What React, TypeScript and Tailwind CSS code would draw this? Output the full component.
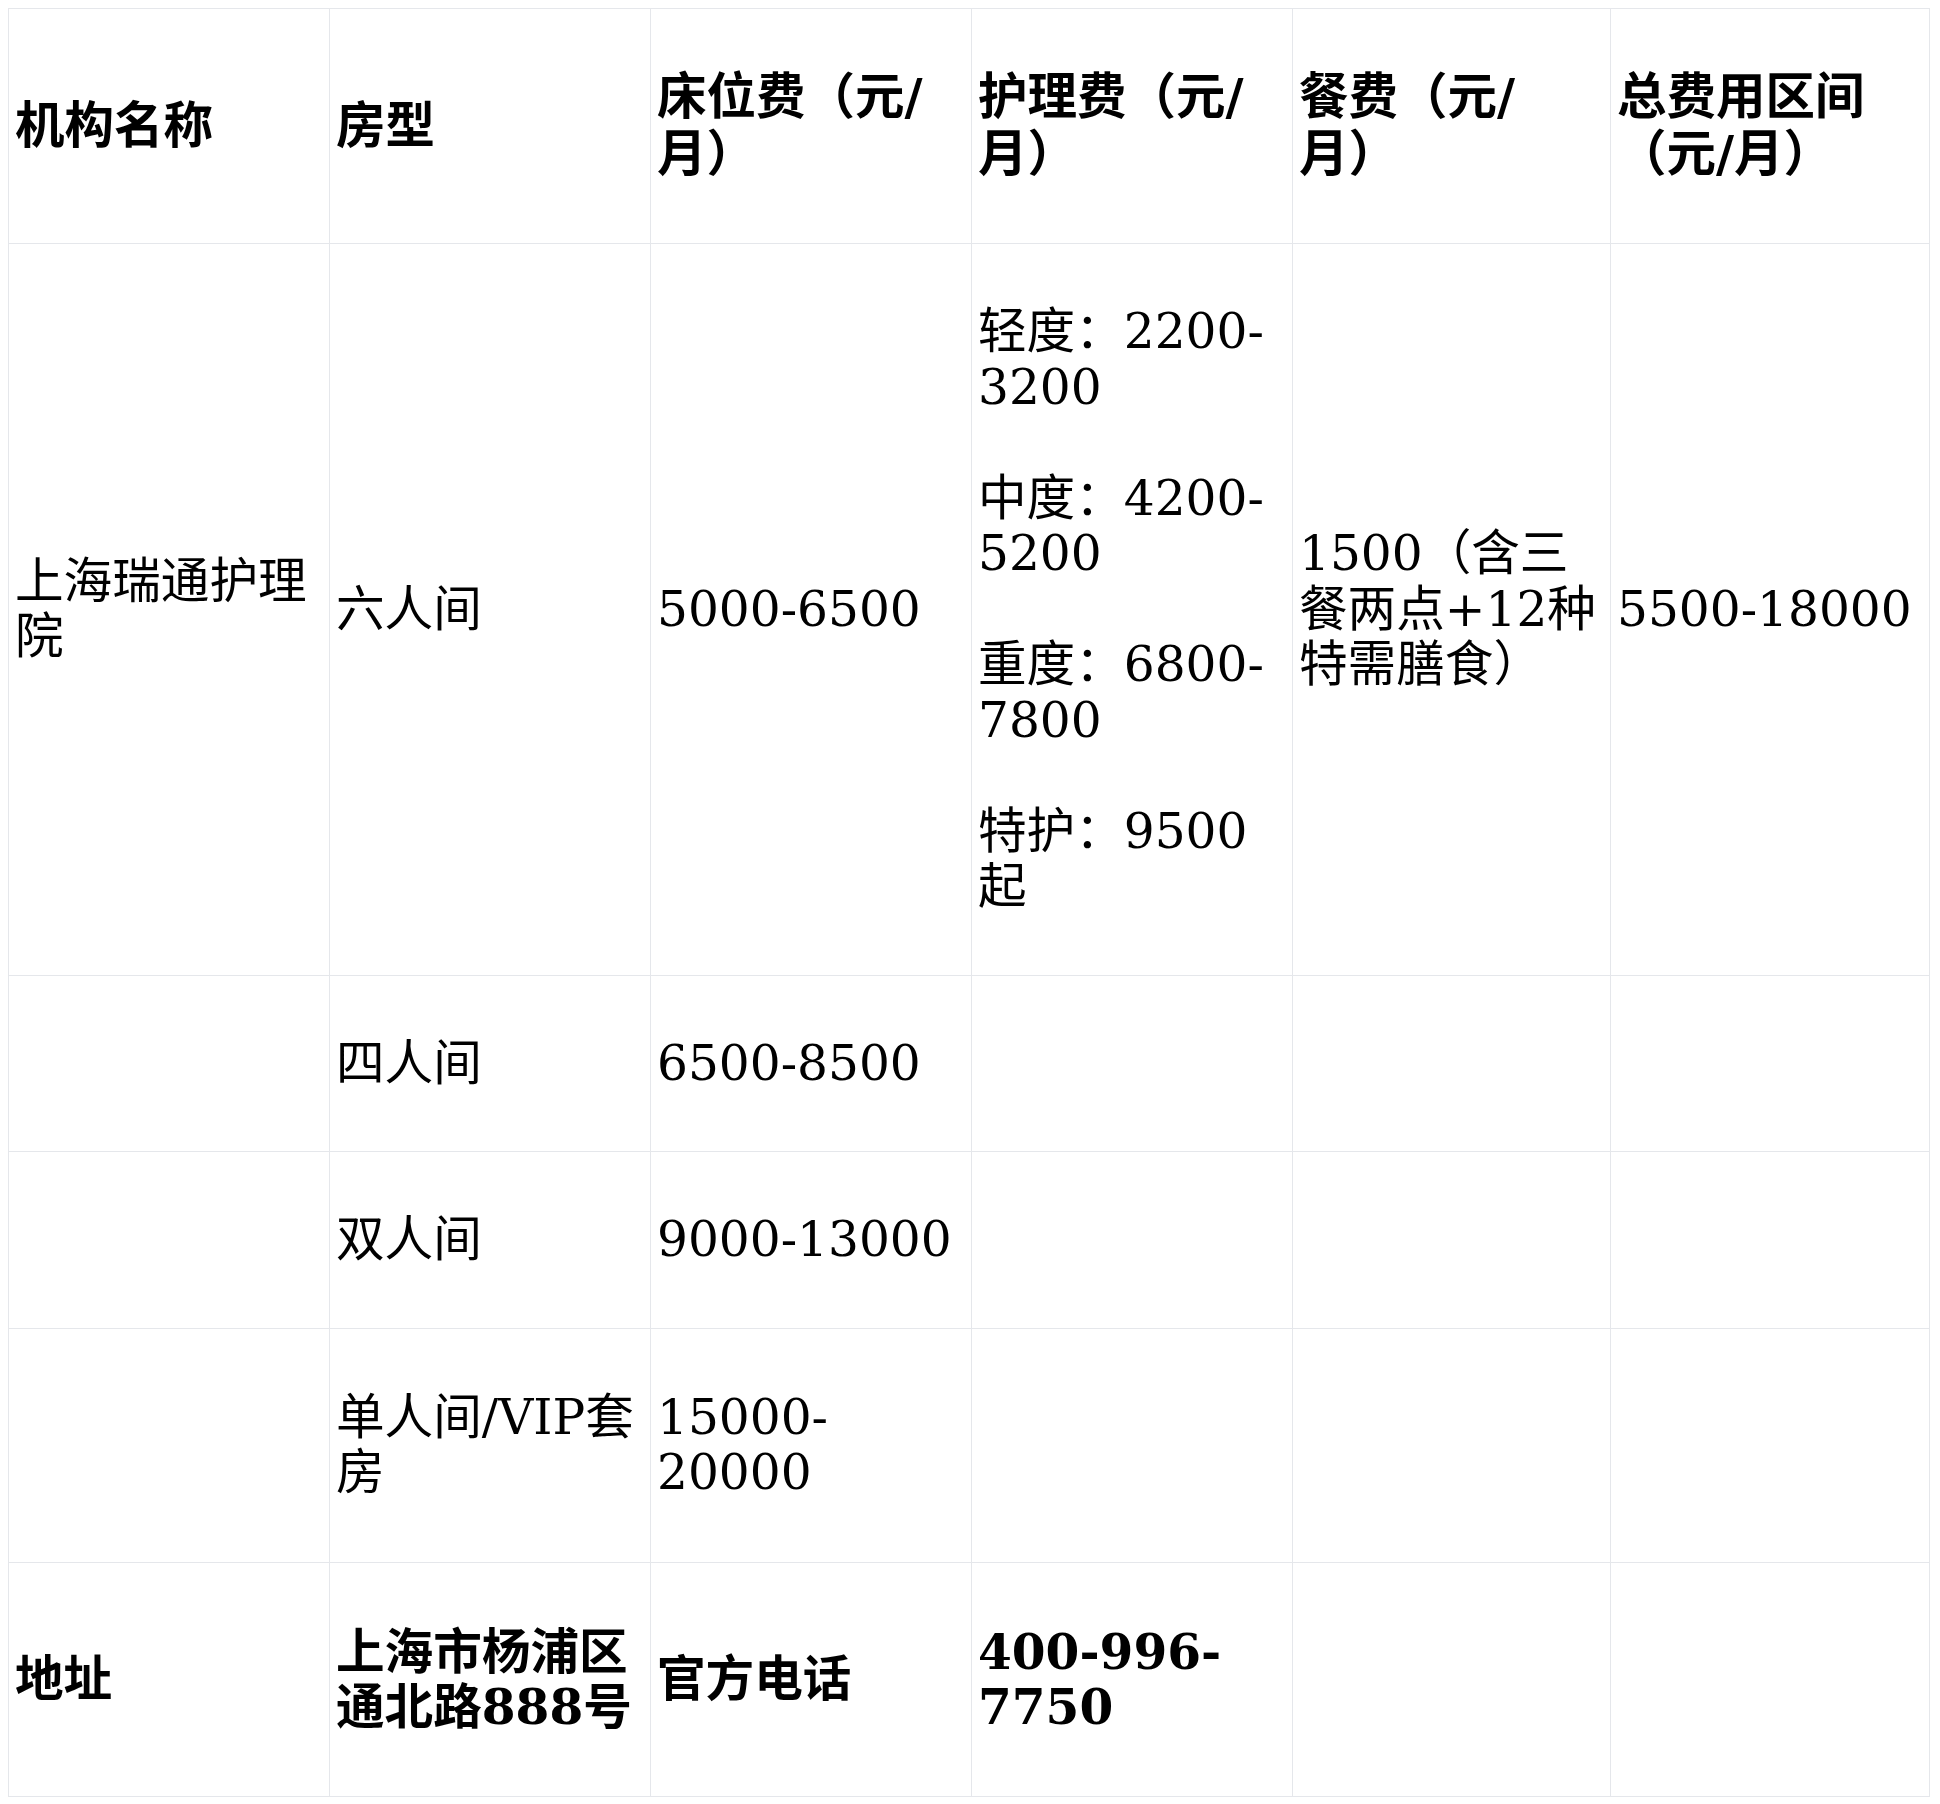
import React from 'react';

const HEADERS = ['机构名称', '房型', '床位费（元/月）', '护理费（元/月）', '餐费（元/月）', '总费用区间（元/月）'];

const COL_WIDTHS = ['w-[321px]', 'w-[321px]', 'w-[321px]', 'w-[321px]', 'w-[318px]', 'w-[319px]'];

const cell = 'border border-[#e5e7eb] px-[6px] align-middle text-left';
const td = `${cell} py-[60px]`;
const tdTall = `${cell} py-[61px]`;

export default function App() {
  return (
    <div className="bg-white min-h-screen p-2 text-black">
      <table
        className="table-fixed border-collapse w-[1921px] text-[48.6px] leading-[55.5px] [text-spacing-trim:space-all]"
        style={{ fontFamily: '"DejaVu Serif", "Noto Sans CJK SC", serif' }}
      >
        <colgroup>
          {COL_WIDTHS.map((w, i) => (
            <col key={i} className={w} />
          ))}
        </colgroup>
        <thead>
          <tr>
            {HEADERS.map((h) => (
              <th
                key={h}
                className={`${td} font-bold text-[49.5px] leading-[57px]`}
                style={{ fontFamily: '"DejaVu Sans", "Noto Sans CJK SC", sans-serif' }}
              >
                {h}
              </th>
            ))}
          </tr>
        </thead>
        <tbody>
          <tr>
            <td className={td}>上海瑞通护理院</td>
            <td className={td}>六人间</td>
            <td className={td}>5000-6500</td>
            <td className={td}>
              轻度：2200-3200
              <br />
              <br />
              中度：4200-5200
              <br />
              <br />
              重度：6800-7800
              <br />
              <br />
              特护：9500起
            </td>
            <td className={td}>1500（含三餐两点+12种特需膳食）</td>
            <td className={td}>5500-18000</td>
          </tr>
          <tr>
            <td className={td}></td>
            <td className={td}>四人间</td>
            <td className={td}>6500-8500</td>
            <td className={td}></td>
            <td className={td}></td>
            <td className={td}></td>
          </tr>
          <tr>
            <td className={td}></td>
            <td className={td}>双人间</td>
            <td className={td}>9000-13000</td>
            <td className={td}></td>
            <td className={td}></td>
            <td className={td}></td>
          </tr>
          <tr>
            <td className={tdTall}></td>
            <td className={tdTall}>单人间/VIP套房</td>
            <td className={tdTall}>15000-20000</td>
            <td className={tdTall}></td>
            <td className={tdTall}></td>
            <td className={tdTall}></td>
          </tr>
          <tr className="font-bold">
            <td className={tdTall}>地址</td>
            <td className={tdTall}>上海市杨浦区通北路888号</td>
            <td className={tdTall}>官方电话</td>
            <td className={tdTall}>400-996-7750</td>
            <td className={tdTall}></td>
            <td className={tdTall}></td>
          </tr>
        </tbody>
      </table>
    </div>
  );
}
